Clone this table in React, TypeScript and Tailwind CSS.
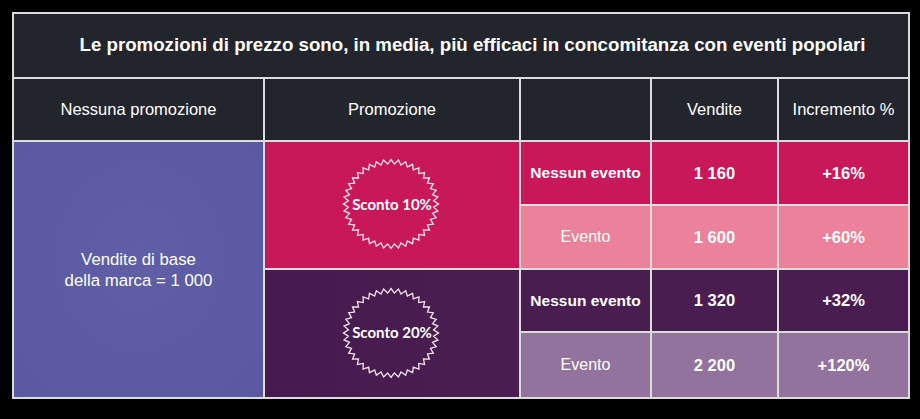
import React from "react";

function Burst({ label }: { label: string }) {
  const n = 40;
  const pts: string[] = [];
  for (let i = 0; i < n * 2; i++) {
    const a = (Math.PI * i) / n - Math.PI / 2;
    const r = i % 2 === 0 ? 1 : 0.9;
    pts.push(`${(50 + 47.5 * r * Math.cos(a)).toFixed(2)},${(46 + 44.5 * r * Math.sin(a)).toFixed(2)}`);
  }
  return (
    <div className="relative -ml-[3px] -mt-[2px] flex h-[92px] w-[100px] items-center justify-center">
      <svg className="absolute inset-0" width="100" height="92" viewBox="0 0 100 92">
        <polygon points={pts.join(" ")} fill="none" stroke="#f6e4ec" strokeWidth="1.3" strokeLinejoin="miter" />
      </svg>
      <span className="relative ml-[3px] font-['Lato',sans-serif] text-[15px] font-bold text-white">{label}</span>
    </div>
  );
}

const cell = "flex items-center justify-center text-white";

export default function App() {
  return (
    <div className="h-[419px] w-[920px] bg-black pl-[12px] pt-[12px] font-['Liberation_Sans',Arial,sans-serif]">
      <div className="grid w-[898px] grid-cols-[249px_254px_129px_125px_129px] grid-rows-[63px_61px_62px_62px_61px_64px] gap-[2px] bg-[#dcdcdc] p-[2px]">
        <div className={`${cell} col-span-5 bg-[#23252d] pl-[23px] text-[18.7px] font-bold`}>
          Le promozioni di prezzo sono, in media, più efficaci in concomitanza con eventi popolari
        </div>

        <div className={`${cell} bg-[#23252d] text-[16.5px]`}>Nessuna promozione</div>
        <div className={`${cell} bg-[#23252d] text-[16.5px]`}>Promozione</div>
        <div className="bg-[#23252d]" />
        <div className={`${cell} bg-[#23252d] text-[16.5px]`}>Vendite</div>
        <div className={`${cell} bg-[#23252d] text-[16.5px]`}>Incremento %</div>

        <div
          className={`${cell} col-start-1 row-start-3 row-span-4 flex-col bg-[radial-gradient(ellipse_at_50%_45%,#5f5fa7_0%,#5b5ba3_60%,#5a5aa3_100%)] text-[16.8px] leading-[21px] text-[#eeeef8]`}
        >
          <span>Vendite di base</span>
          <span>della marca = 1 000</span>
        </div>

        <div className={`${cell} col-start-2 row-start-3 row-span-2 bg-[#c8185a]`}>
          <Burst label="Sconto 10%" />
        </div>
        <div className={`${cell} col-start-3 row-start-3 bg-[#c8185a] text-[15.5px] font-bold`}>Nessun evento</div>
        <div className={`${cell} col-start-4 row-start-3 bg-[#c8185a] text-[16.5px] font-bold`}>1 160</div>
        <div className={`${cell} col-start-5 row-start-3 bg-[#c8185a] text-[16.5px] font-bold`}>+16%</div>

        <div className={`${cell} col-start-3 row-start-4 bg-[#ec8299] text-[16px]`}>Evento</div>
        <div className={`${cell} col-start-4 row-start-4 bg-[#ec8299] text-[16.5px] font-bold`}>1 600</div>
        <div className={`${cell} col-start-5 row-start-4 bg-[#ec8299] text-[16.5px] font-bold`}>+60%</div>

        <div className={`${cell} col-start-2 row-start-5 row-span-2 bg-[linear-gradient(90deg,#461a4e,#4b1e52)]`}>
          <Burst label="Sconto 20%" />
        </div>
        <div className={`${cell} col-start-3 row-start-5 bg-[#4a1d51] text-[15.5px] font-bold`}>Nessun evento</div>
        <div className={`${cell} col-start-4 row-start-5 bg-[#4a1d51] text-[16.5px] font-bold`}>1 320</div>
        <div className={`${cell} col-start-5 row-start-5 bg-[#4a1d51] text-[16.5px] font-bold`}>+32%</div>

        <div className={`${cell} col-start-3 row-start-6 bg-[#93739d] text-[16px]`}>Evento</div>
        <div className={`${cell} col-start-4 row-start-6 bg-[#93739d] text-[16.5px] font-bold`}>2 200</div>
        <div className={`${cell} col-start-5 row-start-6 bg-[#93739d] text-[16.5px] font-bold`}>+120%</div>
      </div>
    </div>
  );
}
